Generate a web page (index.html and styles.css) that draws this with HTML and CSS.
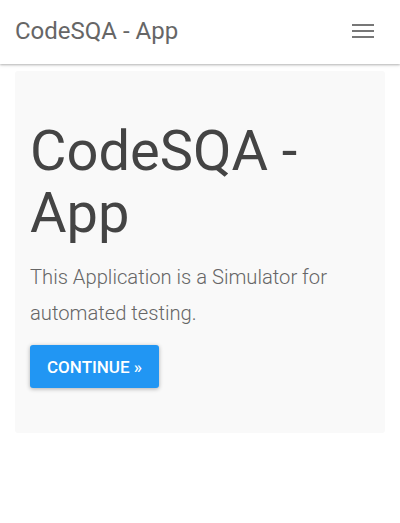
FILE: index.html
```html
<!DOCTYPE html>
<html lang="en">
<head>
<meta charset="utf-8">
<title>CodeSQA - App</title>
<link rel="stylesheet" href="styles.css">
</head>
<body>
<nav class="navbar">
  <a class="brand" href="#">CodeSQA - App</a>
  <button class="toggle" type="button" aria-label="Toggle navigation">
    <span class="bar"></span><span class="bar"></span><span class="bar"></span>
  </button>
</nav>
<main class="container">
  <section class="jumbotron">
    <h1 class="title">CodeSQA - App</h1>
    <p class="lead">This Application is a Simulator for automated testing.</p>
    <a class="btn" href="#">CONTINUE &raquo;</a>
  </section>
</main>
</body>
</html>
```
FILE: styles.css
```css
* { box-sizing: border-box; }
html, body { margin: 0; padding: 0; background: #fff; }
body { font-family: Roboto, "Noto Sans", "Liberation Sans", sans-serif; color: #666; }

.navbar {
  height: 64px;
  display: flex;
  align-items: center;
  justify-content: space-between;
  padding: 0 15px;
  background: #fff;
  box-shadow: 0 1px 2px rgba(0,0,0,0.25), 0 2px 4px rgba(0,0,0,0.06);
  position: relative;
  z-index: 1;
}
.brand {
  font-size: 24px;
  color: #666;
  text-decoration: none;
  margin-top: -2px;
}
.toggle {
  display: flex;
  flex-direction: column;
  gap: 4px;
  padding: 0;
  margin: -2px 11px 0 0;
  background: none;
  border: 0;
}
.bar {
  display: block;
  width: 22px;
  height: 2px;
  background: #777;
}

.container { padding: 7px 15px 0; }
.jumbotron {
  background: #f9f9f9;
  border-radius: 3px;
  padding: 50px 15px 45px;
}
.title {
  margin: 0 0 15px;
  font-size: 56px;
  line-height: 1.1;
  font-weight: 400;
  color: #444;
}
.lead {
  margin: 0 0 14px;
  font-size: 20.2px;
  line-height: 36px;
  font-weight: 300;
  color: #666;
}
.btn {
  display: inline-flex;
  align-items: center;
  height: 43px;
  padding: 0 17px;
  background: #2196f3;
  color: #fff;
  font-size: 17px;
  font-weight: 500;
  text-decoration: none;
  border-radius: 3px;
  box-shadow: 0 1px 4px rgba(0,0,0,0.3);
}
```
